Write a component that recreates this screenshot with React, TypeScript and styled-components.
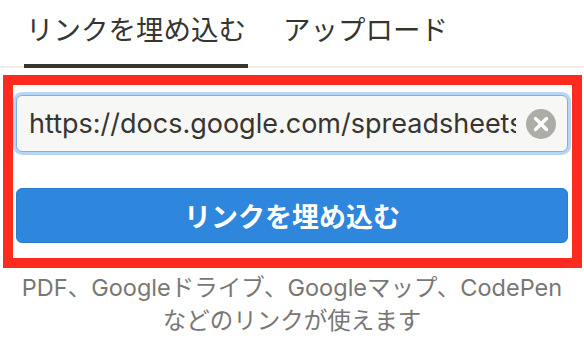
import React from 'react';
import styled, { createGlobalStyle } from 'styled-components';

const GlobalStyle = createGlobalStyle`
  body {
    margin: 0;
    background: #ffffff;
    font-family: 'Inter', 'Noto Sans CJK JP', sans-serif;
    color: #37352f;
  }
`;

const Page = styled.div`
  width: 584px;
  display: flex;
  flex-direction: column;
`;

const TabBar = styled.div`
  display: flex;
  gap: 33px;
  padding-left: 24px;
  border-bottom: 2px solid #ededed;
`;

const Tab = styled.div<{ $active?: boolean }>`
  padding: 10px 2px 14px;
  font-size: 27.5px;
  line-height: 40px;
  color: #37352f;
  margin-bottom: -2px;
  border-bottom: 4px solid ${(p) => (p.$active ? '#37352f' : 'transparent')};
`;

const Highlight = styled.div`
  margin: 7px 2px 0 3px;
  border: 10px solid #fd2a1f;
  padding: 10px 4px 15px 3px;
  display: flex;
  flex-direction: column;
  gap: 36px;
`;

const Field = styled.div`
  height: 57px;
  box-sizing: border-box;
  display: flex;
  align-items: center;
  gap: 10px;
  padding: 0 11px 0 12px;
  background: #f7f7f5;
  border: 1px solid #7fb1e8;
  border-radius: 6px;
  box-shadow: 0 0 0 3px #b8d5f4;
`;

const UrlInput = styled.input`
  flex: 1;
  min-width: 0;
  border: none;
  outline: none;
  background: transparent;
  padding: 0;
  font-family: 'Inter', 'Noto Sans CJK JP', sans-serif;
  font-size: 27px;
  color: #37352f;
`;

const ClearButton = styled.div`
  width: 30px;
  height: 30px;
  flex-shrink: 0;
  display: flex;
`;

const SubmitButton = styled.button`
  height: 55px;
  box-sizing: border-box;
  border: 1px solid #2a7ccd;
  border-radius: 6px;
  background: #2e86dd;
  color: #ffffff;
  font-family: 'Inter', 'Noto Sans CJK JP', sans-serif;
  font-size: 27px;
  font-weight: 700;
  cursor: pointer;
`;

const Caption = styled.p`
  margin: 3px 0 0;
  text-align: center;
  font-size: 23.5px;
  line-height: 33px;
  color: #787774;
`;

function App() {
  return (
    <Page>
      <GlobalStyle />
      <TabBar>
        <Tab $active>リンクを埋め込む</Tab>
        <Tab>アップロード</Tab>
      </TabBar>
      <Highlight>
        <Field>
          <UrlInput defaultValue="https://docs.google.com/spreadsheets/d/1" readOnly />
          <ClearButton>
            <svg width="30" height="30" viewBox="0 0 30 30">
              <circle cx="15" cy="15" r="15" fill="#adada8" />
              <path
                d="M9.5 9.5 L20.5 20.5 M20.5 9.5 L9.5 20.5"
                stroke="#ffffff"
                strokeWidth="3.4"
                strokeLinecap="round"
              />
            </svg>
          </ClearButton>
        </Field>
        <SubmitButton>リンクを埋め込む</SubmitButton>
      </Highlight>
      <Caption>
        PDF、Googleドライブ、Googleマップ、CodePen
        <br />
        などのリンクが使えます
      </Caption>
    </Page>
  );
}

export default App;
